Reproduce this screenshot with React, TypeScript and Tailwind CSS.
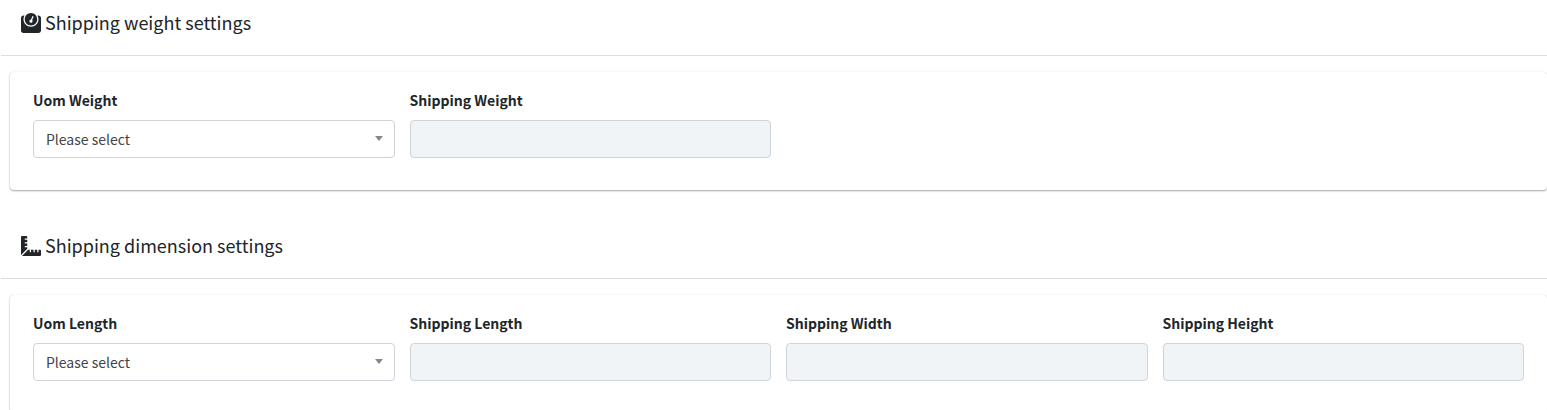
import type { ReactNode } from "react";
import { FaRulerCombined, FaWeight } from "react-icons/fa";

const controlClass =
  "block h-[38px] w-full rounded border border-[#ced4da] text-sm";

function Field({ id, label, children }: { id: string; label: string; children: ReactNode }) {
  return (
    <div className="min-w-0">
      <label htmlFor={id} className="mb-2 block text-sm leading-6 font-bold">
        {label}
      </label>
      {children}
    </div>
  );
}

function UnitSelect({ id, label }: { id: string; label: string }) {
  return (
    <Field id={id} label={label}>
      <div className="relative">
        <select
          id={id}
          className={`${controlClass} appearance-none bg-white px-3 text-[#444]`}
        >
          <option>Please select</option>
        </select>
        <span className="pointer-events-none absolute top-4 right-3 border-x-4 border-t-5 border-x-transparent border-t-[#888]" />
      </div>
    </Field>
  );
}

function DisabledInput({ id, label }: { id: string; label: string }) {
  return (
    <Field id={id} label={label}>
      <input id={id} type="text" disabled className={`${controlClass} bg-[#f0f4f7] px-3`} />
    </Field>
  );
}

function Section({ icon, title, children }: { icon: ReactNode; title: string; children: ReactNode }) {
  return (
    <section className="mb-[33px]">
      <header className="ml-px flex h-14 items-start gap-1 border-b border-[#dedede] pt-[13px] pl-5">
        {icon}
        <h2 className="text-lg leading-[18px]">{title}</h2>
      </header>
      <div className="mt-4 ml-2.5 grid grid-cols-4 gap-[15px] rounded bg-white px-[23px] pt-4 pb-8 shadow-[0_0_1px_rgba(0,0,0,0.13),0_1px_2px_rgba(0,0,0,0.35)]">
        {children}
      </div>
    </section>
  );
}

export default function App() {
  return (
    <main className="overflow-hidden bg-white font-['Noto_Sans_CJK_SC','Noto_Sans',sans-serif] text-[#212529]">
      <Section icon={<FaWeight className="size-5" aria-hidden />} title="Shipping weight settings">
        <UnitSelect id="uom-weight" label="Uom Weight" />
        <DisabledInput id="shipping-weight" label="Shipping Weight" />
      </Section>
      <Section icon={<FaRulerCombined className="size-5" aria-hidden />} title="Shipping dimension settings">
        <UnitSelect id="uom-length" label="Uom Length" />
        <DisabledInput id="shipping-length" label="Shipping Length" />
        <DisabledInput id="shipping-width" label="Shipping Width" />
        <DisabledInput id="shipping-height" label="Shipping Height" />
      </Section>
    </main>
  );
}
